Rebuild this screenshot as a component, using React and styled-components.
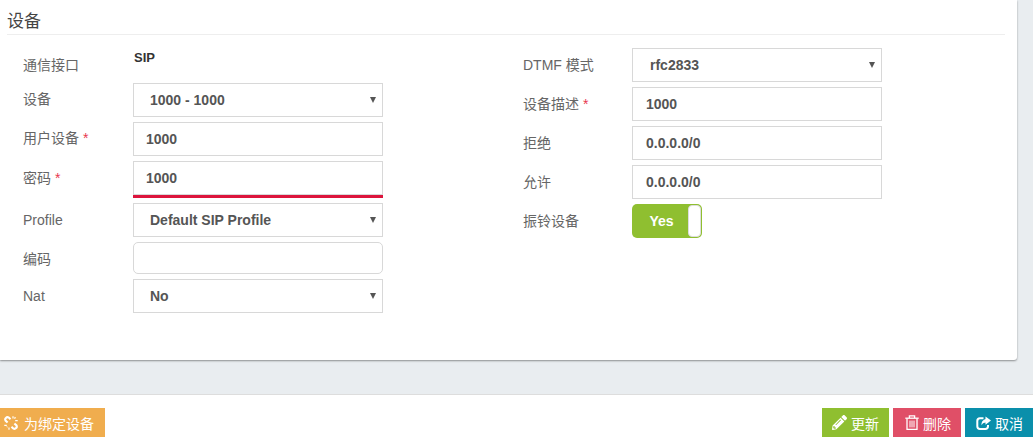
import React from 'react';
import styled, { createGlobalStyle } from 'styled-components';
import { FaPencilAlt } from 'react-icons/fa';

const GlobalStyle = createGlobalStyle`
  html, body {
    margin: 0;
    padding: 0;
    height: 100%;
    overflow: hidden;
    background: #e9edf0;
  }
  body {
    font-family: "Liberation Sans", "Noto Sans CJK SC", sans-serif;
    font-size: 14px;
    color: #555;
  }
  * {
    box-sizing: border-box;
  }
`;

const Page = styled.div`
  width: 1033px;
  height: 437px;
  display: flex;
  flex-direction: column;
`;

const Card = styled.section`
  width: 1017px;
  height: 360px;
  padding: 10px 12px 0 7px;
  background: #fff;
  border-radius: 0 0 3px 0;
  box-shadow: 0 1px 2px rgba(0, 0, 0, 0.4);
`;

const Heading = styled.h3`
  margin: 0;
  height: 25px;
  font-size: 17px;
  line-height: 24px;
  font-weight: 400;
  color: #444;
  border-bottom: 1px solid #eee;
`;

const Columns = styled.div`
  display: flex;
  padding: 13px 0 0 16px;
`;

const Column = styled.div`
  display: flex;
  flex-direction: column;
  flex: none;
  width: ${(p) => p.$w}px;
`;

const Row = styled.div`
  display: flex;
  align-items: center;
  height: ${(p) => p.$h || 34}px;
  margin-bottom: 5px;
`;

const Label = styled.label`
  width: ${(p) => p.$w}px;
  flex: none;
  font-size: 14px;
  line-height: 20px;
  color: #666;
  margin-top: ${(p) => p.$offset || 0}px;
`;

const Star = styled.span`
  color: #e8384f;
`;

const Plain = styled.div`
  font-size: 13px;
  font-weight: 700;
  color: #333;
  line-height: 14px;
  padding-left: 1px;
  margin-top: -10px;
`;

const Input = styled.div`
  width: 250px;
  height: ${(p) => p.$h || 34}px;
  padding: 0 12px 0 ${(p) => 12 + (p.$shift || 0)}px;
  border: 1px solid #d8d8d8;
  border-radius: ${(p) => (p.$round ? 5 : 0)}px;
  font-size: 14px;
  font-weight: 700;
  line-height: 32px;
  color: #555;
  background: #fff;
`;

const Select = styled(Input)`
  position: relative;
  padding-left: ${(p) => 16 + (p.$shift || 0)}px;
  &::after {
    content: '';
    position: absolute;
    right: 6px;
    top: 13px;
    border-left: 3px solid transparent;
    border-right: 3px solid transparent;
    border-top: 6px solid #555;
  }
`;

const ErrorWrap = styled.div`
  height: 37px;
  border-bottom: 3px solid #dc143c;
`;

const Toggle = styled.div`
  display: flex;
  width: 70px;
  height: 34px;
  padding: 1px;
  border-radius: 5px;
  background: #8fbf30;
  color: #fff;
  font-size: 14px;
  font-weight: 700;
  line-height: 32px;
`;

const ToggleText = styled.span`
  flex: 1;
  text-align: center;
  padding-left: 2px;
`;

const ToggleKnob = styled.span`
  width: 13px;
  border-radius: 4px;
  background: #fff;
  border: 1px solid #ddd;
`;

const Spacer = styled.div`
  height: 34px;
  flex: none;
`;

const Footer = styled.footer`
  display: flex;
  justify-content: space-between;
  align-items: flex-end;
  height: 43px;
  background: #fff;
  border-top: 1px solid #ddd;
`;

const Actions = styled.div`
  display: flex;
  gap: 4px;
`;

const Button = styled.button`
  display: flex;
  align-items: center;
  gap: ${(p) => p.$gap || 4}px;
  width: ${(p) => p.$w || 68}px;
  height: 29px;
  padding: 0 0 0 ${(p) => p.$pad || 10}px;
  border: 0;
  background: ${(p) => p.$bg};
  color: #fff;
  font-family: inherit;
  font-size: 14px;
  svg {
    flex: none;
  }
`;

const UnlinkIcon = () => (
  <svg width="14" height="14" viewBox="0 0 14 14" fill="none" stroke="currentColor" strokeWidth="2.1">
    <path d="M6.5 3.2 L4.8 1.6 Q3.2 0.6 1.9 1.9 Q0.6 3.2 1.7 4.8 L3.6 6.6" />
    <path d="M7.5 10.8 L9.2 12.4 Q10.8 13.4 12.1 12.1 Q13.4 10.8 12.3 9.2 L10.4 7.4" />
    <path d="M9 0.3 V2.6 M11.3 1 L10.6 2.8 M11.2 4.6 H13.7 M0.3 9.4 H2.8 M2.8 11.2 L3.4 10.6 M5 11.4 V13.7" strokeWidth="1.2" />
  </svg>
);

const TrashIcon = () => (
  <svg width="14" height="15" viewBox="0 0 14 15" fill="none" stroke="currentColor" strokeWidth="1.3">
    <path d="M4.4 3 V0.8 H9.6 V3" />
    <path d="M0.3 3.2 H13.7" />
    <path d="M2 3.4 V14.3 H12 V3.4" />
    <path d="M5 5.6 V12.4 M7 5.6 V12.4 M9 5.6 V12.4" strokeWidth="1" />
  </svg>
);

const ShareIcon = () => (
  <svg width="15" height="14" viewBox="0 0 15 14" fill="none" stroke="currentColor" strokeWidth="2">
    <path d="M7.5 2.2 H4 Q1.3 2.2 1.3 4.9 V10.2 Q1.3 12.9 4 12.9 H9.3 Q12 12.9 12 10.2 V9" />
    <path
      d="M9.5 0.4 L15 4.6 L9.5 8.8 V6.4 Q6.6 6.4 5.4 9.2 Q5.2 4.4 9.5 3 Z"
      fill="currentColor"
      stroke="none"
    />
  </svg>
);

const leftFields = [
  { label: '设备', kind: 'select', value: '1000 - 1000', offset: -2 },
  { label: '用户设备', star: true, kind: 'input', value: '1000', offset: -2 },
  { label: '密码', star: true, kind: 'input', value: '1000', error: true, offset: -3 },
  { label: 'Profile', kind: 'select', value: 'Default SIP Profile' },
  { label: '编码', kind: 'round', value: '', offset: 1 },
  { label: 'Nat', kind: 'select', value: 'No' },
];

const rightFields = [
  { label: 'DTMF 模式', kind: 'select', value: 'rfc2833' },
  { label: '设备描述', star: true, kind: 'input', value: '1000' },
  { label: '拒绝', kind: 'input', value: '0.0.0.0/0' },
  { label: '允许', kind: 'input', value: '0.0.0.0/0' },
];

function Field({ field, labelWidth, shift }) {
  const labelText = (
    <Label $w={labelWidth} $offset={field.offset}>
      {field.label}
      {field.star && <Star> *</Star>}
    </Label>
  );

  if (field.kind === 'select') {
    return (
      <Row>
        {labelText}
        <Select $shift={shift}>{field.value}</Select>
      </Row>
    );
  }
  if (field.kind === 'round') {
    return (
      <Row $h={32}>
        {labelText}
        <Input $h={32} $round />
      </Row>
    );
  }
  if (field.error) {
    return (
      <Row $h={37}>
        {labelText}
        <ErrorWrap>
          <Input>{field.value}</Input>
        </ErrorWrap>
      </Row>
    );
  }
  return (
    <Row>
      {labelText}
      <Input $shift={shift}>{field.value}</Input>
    </Row>
  );
}

export default function App() {
  return (
    <>
      <GlobalStyle />
      <Page>
        <Card>
          <Heading>设备</Heading>
          <Columns>
            <Column $w={500}>
              <Row $h={30}>
                <Label $w={110} $offset={4}>通信接口</Label>
                <Plain>SIP</Plain>
              </Row>
              {leftFields.map((f) => (
                <Field key={f.label} field={f} labelWidth={110} />
              ))}
            </Column>
            <Column $w={400}>
              {rightFields.map((f) => (
                <Field key={f.label} field={f} labelWidth={109} shift={1} />
              ))}
              <Row>
                <Label $w={109}>振铃设备</Label>
                <Toggle>
                  <ToggleText>Yes</ToggleText>
                  <ToggleKnob />
                </Toggle>
              </Row>
            </Column>
          </Columns>
        </Card>
        <Spacer />
        <Footer>
          <Button $w={105} $pad={4} $gap={6} $bg="#f0ad4e">
            <UnlinkIcon />
            为绑定设备
          </Button>
          <Actions>
            <Button $w={67} $bg="#8fbf30">
              <FaPencilAlt size={15} />
              更新
            </Button>
            <Button $pad={12} $bg="#e04f67">
              <TrashIcon />
              删除
            </Button>
            <Button $pad={11} $bg="#0a8fab">
              <ShareIcon />
              取消
            </Button>
          </Actions>
        </Footer>
      </Page>
    </>
  );
}
